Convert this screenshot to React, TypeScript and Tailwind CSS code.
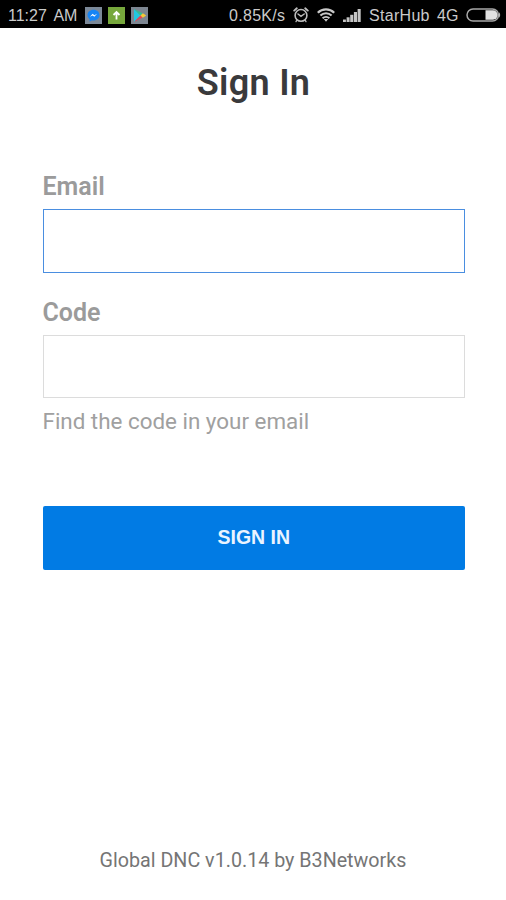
import React from "react";

const AlarmIcon = () => (
  <svg width="16" height="16" viewBox="0 0 16 16" fill="none" stroke="#bdbdbd" strokeLinecap="round">
    <circle cx="8" cy="8.4" r="5.9" strokeWidth="1.6" />
    <path d="M1.2 3.6 3.8 1.3M14.8 3.6 12.2 1.3" strokeWidth="1.9" />
    <path d="M5 7l3 2.3L11.2 7" strokeWidth="1.5" />
    <path d="M3.8 13.2 3 14.6M12.2 13.2l.8 1.4" strokeWidth="1.3" />
  </svg>
);

const WifiIcon = () => (
  <svg width="18" height="14" viewBox="0 0 18 14" fill="none" stroke="#c8c8c8">
    <path d="M.8 4.8c4.6-4.6 11.8-4.6 16.4 0" strokeWidth="2.2" />
    <path d="M3.4 7.6c3.2-3.1 8-3.1 11.2 0" strokeWidth="2.1" />
    <path d="M5.6 10.2c1.9-1.7 4.9-1.7 6.8 0" strokeWidth="2" />
    <path d="M6.8 11h4.4L9 13.7z" fill="#c8c8c8" stroke="none" />
  </svg>
);

const SignalIcon = () => (
  <svg width="18" height="13" viewBox="0 0 18 13" fill="#c4c4c4">
    <rect x="0" y="10.5" width="2.9" height="2.5" />
    <rect x="3.6" y="8.3" width="3" height="4.7" />
    <rect x="7.2" y="5.8" width="3.1" height="7.2" />
    <rect x="10.9" y="3" width="3.1" height="10" />
    <rect x="14.6" y="0" width="3.1" height="13" />
  </svg>
);

const BatteryIcon = () => (
  <svg width="35" height="14" viewBox="0 0 35 14">
    <rect x="1" y="1" width="31.5" height="12" rx="6" fill="none" stroke="#a8a8a8" strokeWidth="1.5" />
    <path d="M19.5 2.3h7.5a4.7 4.7 0 0 1 0 9.4h-7.5z" fill="#e2e2e2" />
    <path d="M33 4.3c1.6 1.4 1.6 4 0 5.4z" fill="#b5b5b5" />
  </svg>
);

const MessengerIcon = () => (
  <svg width="17" height="17" viewBox="0 0 17 17">
    <rect width="17" height="17" fill="#7c8998" />
    <path d="M8.5 2.7c-3.4 0-6 2.3-6 5.4 0 1.7.8 3.2 2.1 4.2v2.3l2.1-1.2c.6.2 1.2.2 1.8.2 3.4 0 6-2.4 6-5.5s-2.6-5.4-6-5.4z" fill="#1685f5" />
    <path d="M4.8 9.8 7.7 6.8 9.3 8.3 12.2 6.8 9.3 9.8 7.7 8.4z" fill="#fff" />
  </svg>
);

const UploadIcon = () => (
  <svg width="17" height="17" viewBox="0 0 17 17">
    <rect width="17" height="17" fill="#77a83c" />
    <path d="M8.5 12.5V5.5M5.5 8l3-3 3 3" fill="none" stroke="#fff" strokeWidth="1.8" />
  </svg>
);

const PlayIcon = () => (
  <svg width="17" height="17" viewBox="0 0 17 17">
    <rect width="17" height="17" fill="#7d8691" />
    <path d="M3 2v13l6.5-6.5z" fill="#22c8df" />
    <path d="M3 2 9.5 8.5l2.4-2.1z" fill="#2fbf94" />
    <path d="M3 15 9.5 8.5l2.4 2.1z" fill="#e34558" />
    <path d="M11.9 6.2 15.2 8.5l-3.3 2.3-2.4-2.3z" fill="#f6c936" />
  </svg>
);

const StatusBar = () => (
  <div className="flex h-7 items-center justify-between bg-black pr-[5px] pl-2 pt-[2px] font-['Liberation_Sans',sans-serif] text-base text-[#cacaca]">
    <div className="flex items-center">
      <span className="w-[77px] whitespace-nowrap pt-[2px] [word-spacing:3px]">11:27 AM</span>
      <div className="flex gap-[6px]">
        <MessengerIcon />
        <UploadIcon />
        <PlayIcon />
      </div>
    </div>
    <div className="flex items-center">
      <span className="w-16 whitespace-nowrap pt-[2px] tracking-[0.3px]">0.85K/s</span>
      <AlarmIcon />
      <span className="ml-2"><WifiIcon /></span>
      <span className="ml-2"><SignalIcon /></span>
      <span className="ml-2 w-[68px] whitespace-nowrap pt-[2px] tracking-[0.3px]">StarHub</span>
      <span className="w-[29px] pt-[2px]">4G</span>
      <BatteryIcon />
    </div>
  </div>
);

const App = () => {
  return (
    <div className="flex h-[900px] w-[506px] flex-col overflow-hidden bg-white font-['Roboto',sans-serif]">
      <StatusBar />
      <h1 className="mt-[34px] pl-px text-center text-[36px] leading-[42px] font-semibold tracking-[0.3px] text-[#3a3a3c]">Sign In</h1>
      <form className="flex flex-col pr-[41px] pl-[42.5px]">
        <label htmlFor="email" className="mt-[68px] text-[25px] leading-[30px] font-semibold text-[#9b9b9b]">
          Email
        </label>
        <input id="email" className="mt-[7px] h-16 border border-[#4a8ee0] px-4 text-xl outline-none" />
        <label htmlFor="code" className="mt-[25px] text-[25px] leading-[30px] font-semibold text-[#9b9b9b]">
          Code
        </label>
        <input id="code" className="mt-[7px] h-[63px] border border-[#dcdcdc] px-4 text-xl outline-none" />
        <p className="mt-[9px] text-[22.4px] leading-7 text-[#a0a0a0]">Find the code in your email</p>
        <button
          type="button"
          className="mt-[71px] h-16 rounded-xs bg-[#017be4] font-['Liberation_Sans',sans-serif] text-[19.5px] font-bold text-[#eaf4ff]"
        >
          SIGN IN
        </button>
      </form>
      <p className="mt-auto mb-[27px] text-center text-[19.7px] leading-6 text-[#757575]">Global DNC v1.0.14 by B3Networks</p>
    </div>
  );
};

export default App;
